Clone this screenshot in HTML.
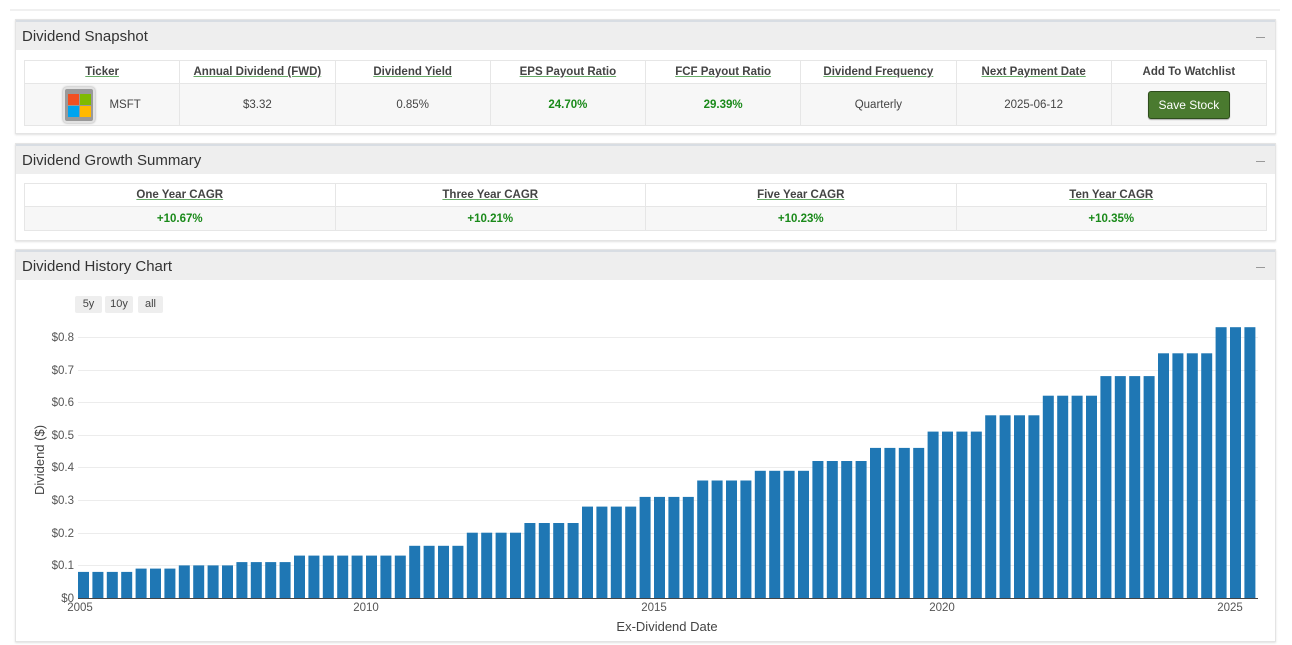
<!DOCTYPE html>
<html><head><meta charset="utf-8"><style>
*{box-sizing:border-box;margin:0;padding:0}
body{width:1292px;height:645px;background:#fff;font-family:"Liberation Sans",sans-serif;color:#333;position:relative;overflow:hidden}
.topline{position:absolute;left:10px;top:9px;width:1270px;height:2px;background:#f0f0f0}
.panel{position:absolute;left:15px;width:1261px;background:#fff;border:1px solid #e4e4e4;box-shadow:0 1px 2px rgba(0,0,0,.12)}
.hd{height:30px;background:#eeeeee;border-top:2px solid #d8dde3;font-size:15px;line-height:29px;padding-left:6px;color:#333;position:relative}
.hd:after{content:"";position:absolute;right:10px;top:15px;width:9px;height:1px;background:#999}
table{position:absolute;left:8px;border-collapse:collapse;table-layout:fixed;width:1243px}
td{border:1px solid #e6e6e6;text-align:center;font-size:11.5px;color:#444}
tr.h td{height:23px;font-weight:bold;background:#fff}
tr.h td u{text-decoration:underline;text-decoration-color:#6a6}
tr.d td{background:#f7f7f7}
.g{color:#1a8a1a;font-weight:bold}
.btn{display:inline-block;background:#4a7a2f;border:1px solid #2e4d1c;color:#fff;border-radius:3px;font-size:12px;padding:6px 10px;box-shadow:0 1px 1px rgba(0,0,0,.3)}
.logo{display:inline-block;width:32px;height:36px;border-radius:4px;background:#999;border:2px solid #e2e2e2;vertical-align:middle;position:relative;box-shadow:0 0 2px #999}
.logo i{position:absolute;width:11px;height:11px}
.rb{position:absolute;top:296px;height:17px;background:#eee;font-size:11px;line-height:17px;text-align:center;color:#444;border-radius:2px}
</style></head><body>
<div class="topline"></div>

<div class="panel" style="top:19px;height:115px">
<div class="hd">Dividend Snapshot</div>
<table style="top:40px">
<tr class="h"><td><u>Ticker</u></td><td><u>Annual Dividend (FWD)</u></td><td><u>Dividend Yield</u></td><td><u>EPS Payout Ratio</u></td><td><u>FCF Payout Ratio</u></td><td><u>Dividend Frequency</u></td><td><u>Next Payment Date</u></td><td>Add To Watchlist</td></tr>
<tr class="d" style="height:42px"><td><span class="logo"><i style="left:3px;top:5px;background:#f25022"></i><i style="left:15px;top:5px;background:#7fba00"></i><i style="left:3px;top:17px;background:#00a4ef"></i><i style="left:15px;top:17px;background:#ffb900"></i></span><span style="margin-left:14px">MSFT</span></td><td>$3.32</td><td>0.85%</td><td class="g">24.70%</td><td class="g">29.39%</td><td>Quarterly</td><td>2025-06-12</td><td><span class="btn">Save Stock</span></td></tr>
</table>
</div>

<div class="panel" style="top:143px;height:98px">
<div class="hd">Dividend Growth Summary</div>
<table style="top:39px">
<tr class="h"><td><u>One Year CAGR</u></td><td><u>Three Year CAGR</u></td><td><u>Five Year CAGR</u></td><td><u>Ten Year CAGR</u></td></tr>
<tr class="d" style="height:24px"><td class="g">+10.67%</td><td class="g">+10.21%</td><td class="g">+10.23%</td><td class="g">+10.35%</td></tr>
</table>
</div>

<div class="panel" style="top:249px;height:393px">
<div class="hd">Dividend History Chart</div>
</div>
<div class="rb" style="left:75px;width:27px">5y</div>
<div class="rb" style="left:105px;width:28px">10y</div>
<div class="rb" style="left:138px;width:25px">all</div>

<svg style="position:absolute;left:0;top:0" width="1292" height="645" font-family="Liberation Sans, sans-serif">
<g stroke="#ececec" stroke-width="1">
<line x1="78" x2="1258" y1="337.5" y2="337.5"/><line x1="78" x2="1258" y1="370.5" y2="370.5"/><line x1="78" x2="1258" y1="402.5" y2="402.5"/><line x1="78" x2="1258" y1="435.5" y2="435.5"/><line x1="78" x2="1258" y1="467.5" y2="467.5"/><line x1="78" x2="1258" y1="500.5" y2="500.5"/><line x1="78" x2="1258" y1="533.5" y2="533.5"/><line x1="78" x2="1258" y1="565.5" y2="565.5"/>
</g>
<g font-size="11.5" fill="#555" text-anchor="end">
<text x="74" y="341">$0.8</text><text x="74" y="374">$0.7</text><text x="74" y="406">$0.6</text><text x="74" y="439">$0.5</text><text x="74" y="471">$0.4</text><text x="74" y="504">$0.3</text><text x="74" y="537">$0.2</text><text x="74" y="569">$0.1</text><text x="74" y="602">$0</text>
</g>
<text transform="translate(44,460) rotate(-90)" font-size="13" fill="#444" text-anchor="middle">Dividend ($)</text>
<g font-size="11.5" fill="#555" text-anchor="middle">
<text x="80" y="611">2005</text><text x="366" y="611">2010</text><text x="654" y="611">2015</text><text x="942" y="611">2020</text><text x="1230" y="611">2025</text>
</g>
<text x="667" y="631" font-size="13" fill="#444" text-anchor="middle">Ex-Dividend Date</text>
<g fill="#1f77b4">
<g transform="translate(0,571.9)"><rect x="78" width="11" height="26.1"/><rect x="92.4" width="11" height="26.1"/><rect x="106.8" width="11" height="26.1"/><rect x="121.2" width="11" height="26.1"/></g>
<g transform="translate(0,568.6)"><rect x="135.6" width="11" height="29.4"/><rect x="150" width="11" height="29.4"/><rect x="164.4" width="11" height="29.4"/></g>
<g transform="translate(0,565.4)"><rect x="178.8" width="11" height="32.6"/><rect x="193.2" width="11" height="32.6"/><rect x="207.6" width="11" height="32.6"/><rect x="222" width="11" height="32.6"/></g>
<g transform="translate(0,562.1)"><rect x="236.4" width="11" height="35.9"/><rect x="250.8" width="11" height="35.9"/><rect x="265.2" width="11" height="35.9"/><rect x="279.6" width="11" height="35.9"/></g>
<g transform="translate(0,555.6)"><rect x="294" width="11" height="42.4"/><rect x="308.4" width="11" height="42.4"/><rect x="322.8" width="11" height="42.4"/><rect x="337.2" width="11" height="42.4"/><rect x="351.6" width="11" height="42.4"/><rect x="366" width="11" height="42.4"/><rect x="380.4" width="11" height="42.4"/><rect x="394.8" width="11" height="42.4"/></g>
<g transform="translate(0,545.8)"><rect x="409.2" width="11" height="52.2"/><rect x="423.6" width="11" height="52.2"/><rect x="438" width="11" height="52.2"/><rect x="452.4" width="11" height="52.2"/></g>
<g transform="translate(0,532.7)"><rect x="466.8" width="11" height="65.3"/><rect x="481.2" width="11" height="65.3"/><rect x="495.6" width="11" height="65.3"/><rect x="510" width="11" height="65.3"/></g>
<g transform="translate(0,523)"><rect x="524.4" width="11" height="75"/><rect x="538.8" width="11" height="75"/><rect x="553.2" width="11" height="75"/><rect x="567.6" width="11" height="75"/></g>
<g transform="translate(0,506.6)"><rect x="582" width="11" height="91.4"/><rect x="596.4" width="11" height="91.4"/><rect x="610.8" width="11" height="91.4"/><rect x="625.2" width="11" height="91.4"/></g>
<g transform="translate(0,496.9)"><rect x="639.6" width="11" height="101.1"/><rect x="654" width="11" height="101.1"/><rect x="668.4" width="11" height="101.1"/><rect x="682.8" width="11" height="101.1"/></g>
<g transform="translate(0,480.5)"><rect x="697.2" width="11" height="117.5"/><rect x="711.6" width="11" height="117.5"/><rect x="726" width="11" height="117.5"/><rect x="740.4" width="11" height="117.5"/></g>
<g transform="translate(0,470.8)"><rect x="754.8" width="11" height="127.2"/><rect x="769.2" width="11" height="127.2"/><rect x="783.6" width="11" height="127.2"/><rect x="798" width="11" height="127.2"/></g>
<g transform="translate(0,461)"><rect x="812.4" width="11" height="137"/><rect x="826.8" width="11" height="137"/><rect x="841.2" width="11" height="137"/><rect x="855.6" width="11" height="137"/></g>
<g transform="translate(0,447.9)"><rect x="870" width="11" height="150.1"/><rect x="884.4" width="11" height="150.1"/><rect x="898.8" width="11" height="150.1"/><rect x="913.2" width="11" height="150.1"/></g>
<g transform="translate(0,431.6)"><rect x="927.6" width="11" height="166.4"/><rect x="942" width="11" height="166.4"/><rect x="956.4" width="11" height="166.4"/><rect x="970.8" width="11" height="166.4"/></g>
<g transform="translate(0,415.3)"><rect x="985.2" width="11" height="182.7"/><rect x="999.6" width="11" height="182.7"/><rect x="1014" width="11" height="182.7"/><rect x="1028.4" width="11" height="182.7"/></g>
<g transform="translate(0,395.7)"><rect x="1042.8" width="11" height="202.3"/><rect x="1057.2" width="11" height="202.3"/><rect x="1071.6" width="11" height="202.3"/><rect x="1086" width="11" height="202.3"/></g>
<g transform="translate(0,376.1)"><rect x="1100.4" width="11" height="221.9"/><rect x="1114.8" width="11" height="221.9"/><rect x="1129.2" width="11" height="221.9"/><rect x="1143.6" width="11" height="221.9"/></g>
<g transform="translate(0,353.3)"><rect x="1158" width="11" height="244.7"/><rect x="1172.4" width="11" height="244.7"/><rect x="1186.8" width="11" height="244.7"/><rect x="1201.2" width="11" height="244.7"/></g>
<g transform="translate(0,327.2)"><rect x="1215.6" width="11" height="270.8"/><rect x="1230" width="11" height="270.8"/><rect x="1244.4" width="11" height="270.8"/></g>
</g>
<line x1="78" x2="1258" y1="598.5" y2="598.5" stroke="#444" stroke-width="1"/>
</svg>
</body></html>
